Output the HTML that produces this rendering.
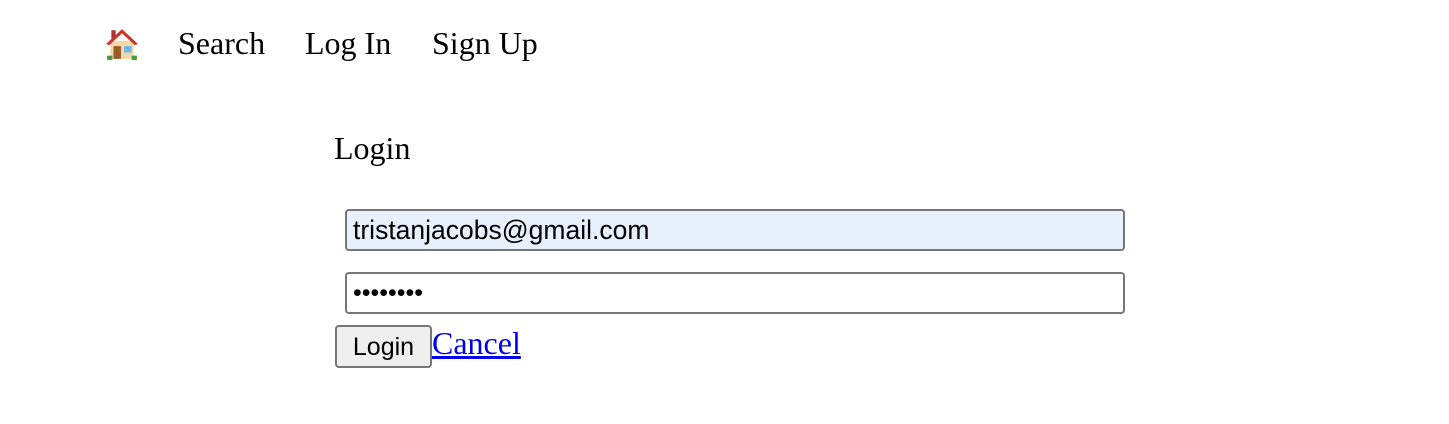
<!DOCTYPE html>
<html><head><style>
body{margin:0;width:1449px;height:424px;background:#fff;position:relative;font-family:"Liberation Serif",serif;overflow:hidden}
.t{position:absolute;font-size:32px;line-height:32px;color:#000;white-space:nowrap}
.in{position:absolute;left:345px;width:770px;height:38px;border:2px solid #767676;border-radius:4px;font-family:"Liberation Sans",sans-serif;font-size:26.5px;line-height:38px;padding-left:6px;box-sizing:content-box}
</style></head><body>
<svg style="position:absolute;left:105px;top:27px" width="34" height="34" viewBox="0 0 32 32">
<rect x="6" y="3" width="4" height="8" fill="#a33"/>
<rect x="5" y="13" width="22" height="17" fill="#f3d9a8"/>
<polygon points="1,16 16,2 31,16 28,17 16,6 4,17" fill="#c8342c"/>
<rect x="8" y="18" width="7" height="12" fill="#9b5a2c"/>
<rect x="18" y="18" width="7" height="6" fill="#6fb7e8"/>
<rect x="2" y="27" width="5" height="4" fill="#4a9a3a"/><rect x="25" y="27" width="5" height="4" fill="#4a9a3a"/>
</svg>
<div class="t" style="left:178px;top:27px">Search</div>
<div class="t" style="left:305px;top:27px">Log In</div>
<div class="t" style="left:432px;top:27px">Sign Up</div>
<div class="t" style="left:334px;top:132px">Login</div>
<div class="in" style="top:209px;background:#e8f0fe">tristanjacobs@gmail.com</div>
<div class="in" style="top:272px;background:#fff;font-size:25px">••••••••</div>
<div style="position:absolute;left:335px;top:325px;width:93px;height:39px;border:2px solid #767676;border-radius:4px;background:#efefef;font-family:'Liberation Sans',sans-serif;font-size:25px;line-height:41px;text-align:center">Login</div>
<div class="t" style="left:432px;top:327px;color:#00e;text-decoration:underline">Cancel</div>
</body></html>
